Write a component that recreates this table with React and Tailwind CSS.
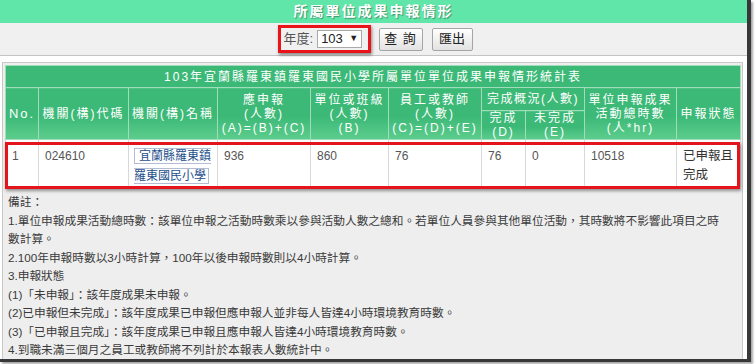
import React from 'react';

const TH = 'border border-[#a3dcbb] bg-linear-to-b from-[#3cb977] from-55% to-[#5ccd8d] text-white font-normal text-[12px] leading-[14px] tracking-[2px] text-center align-middle p-0';
const TD = 'border border-[#d8d8d8] bg-white align-top pl-[6px] pr-[2px] pt-[6px] text-[12px] leading-[20px] text-[#555]';

const NOTES = [
    '備註：',
    '1.單位申報成果活動總時數：該單位申報之活動時數乘以參與活動人數之總和。若單位人員參與其他單位活動，其時數將不影響此項目之時數計算。',
    '2.100年申報時數以3小時計算，100年以後申報時數則以4小時計算。',
    '3.申報狀態',
    '(1)「未申報」：該年度成果未申報。',
    '(2)已申報但未完成」：該年度成果已申報但應申報人並非每人皆達4小時環境教育時數。',
    '(3)「已申報且完成」：該年度成果已申報且應申報人皆達4小時環境教育時數。',
    '4.到職未滿三個月之員工或教師將不列計於本報表人數統計中。',
];

export default function App() {
    return (
        <div className="w-[755px] h-[364px] bg-white overflow-hidden font-['Liberation_Sans','Noto_Sans_CJK_TC',sans-serif]">
            <div className="w-[751px] h-[362px] bg-white border-r-4 border-b-[3px] border-[#383838] shadow-[2px_2px_2px_rgba(0,0,0,0.35)] flex flex-col overflow-hidden">
                {/* page title */}
                <div className="h-[23px] shrink-0 bg-[#60e6a8] flex items-center justify-center text-white font-bold text-[14px] tracking-[2px] [text-shadow:1px_1px_1px_rgba(0,0,0,0.35)]">
                    所屬單位成果申報情形
                </div>

                {/* toolbar */}
                <div className="h-[33px] shrink-0 bg-[#f0f0f0] border-b border-[#c4c4c4] flex items-center justify-center">
                    <div className="h-[28px] w-[93px] border-[3px] border-[#e8141a] shadow-[1px_2px_3px_rgba(0,0,0,0.45)] flex items-center pl-[3px] gap-[4px] ml-[3px]">
                        <span className="text-[13px] text-[#555]">年度:</span>
                        <div className="w-[45px] h-[18px] bg-white border border-[#a9a9a9] flex items-center justify-between px-[3px] text-[13px] text-[#222]">
                            <span>103</span>
                            <span className="text-[9px]">▼</span>
                        </div>
                    </div>
                    <button className="ml-[8px] h-[23px] w-[44px] border border-[#a5a5a5] rounded-[2px] bg-linear-to-b from-white to-[#e2e2e2] text-[13px] text-[#222] tracking-[1px]">
                        查 詢
                    </button>
                    <button className="ml-[9px] h-[23px] w-[41px] border border-[#a5a5a5] rounded-[2px] bg-linear-to-b from-white to-[#e2e2e2] text-[13px] text-[#222]">
                        匯出
                    </button>
                </div>

                {/* result panel */}
                <div className="mt-[6px] ml-[2px] mr-[4px] flex-1 bg-[#eeeeee] border border-b-0 border-[#c8c8c8] px-[2px] pt-[2px]">
                    <div className="relative">
                        <table className="w-[735px] table-fixed border-collapse">
                            <colgroup>
                                <col className="w-[33px]" />
                                <col className="w-[90px]" />
                                <col className="w-[89px]" />
                                <col className="w-[93px]" />
                                <col className="w-[78px]" />
                                <col className="w-[93px]" />
                                <col className="w-[44px]" />
                                <col className="w-[59px]" />
                                <col className="w-[92px]" />
                                <col className="w-[64px]" />
                            </colgroup>
                            <thead>
                                <tr className="h-[22px]">
                                    <th colSpan="10" className="border border-[#a3dcbb] bg-[#3cb977] text-white font-normal text-[12px] tracking-[2px] text-center p-0">
                                        103年宜蘭縣羅東鎮羅東國民小學所屬單位單位成果申報情形統計表
                                    </th>
                                </tr>
                                <tr className="h-[23px]">
                                    <th rowSpan="2" className={`${TH} text-[13px]`}>No.</th>
                                    <th rowSpan="2" className={TH}>機關(構)代碼</th>
                                    <th rowSpan="2" className={TH}>機關(構)名稱</th>
                                    <th rowSpan="2" className={TH}>應申報<br />(人數)<br />(A)=(B)+(C)</th>
                                    <th rowSpan="2" className={TH}>單位或班級<br />(人數)<br />(B)</th>
                                    <th rowSpan="2" className={TH}>員工或教師<br />(人數)<br />(C)=(D)+(E)</th>
                                    <th colSpan="2" className="border border-[#a3dcbb] bg-[#3cb977] text-white font-normal text-[12px] tracking-[1.5px] text-center p-0">完成概況(人數)</th>
                                    <th rowSpan="2" className={TH}>單位申報成果<br />活動總時數<br />(人*hr)</th>
                                    <th rowSpan="2" className={TH}>申報狀態</th>
                                </tr>
                                <tr className="h-[28px]">
                                    <th className={TH}>完成<br />(D)</th>
                                    <th className={TH}>未完成<br />(E)</th>
                                </tr>
                            </thead>
                            <tbody>
                                <tr className="h-[47px]">
                                    <td className={TD}>1</td>
                                    <td className={TD}>024610</td>
                                    <td className={`${TD} !pl-[5px] !pr-[4px]`}>
                                        <a className="border border-[#b4bcd4] pl-[4px] pr-[2px] text-[#1d4f8c] [box-decoration-break:slice] leading-[20px]">
                                            宜蘭縣羅東鎮羅東國民小學
                                        </a>
                                    </td>
                                    <td className={TD}>936</td>
                                    <td className={TD}>860</td>
                                    <td className={TD}>76</td>
                                    <td className={TD}>76</td>
                                    <td className={TD}>0</td>
                                    <td className={TD}>10518</td>
                                    <td className={`${TD} !text-[#333] !text-[12.5px] !leading-[19px] !pt-[7px]`}>已申報且完成</td>
                                </tr>
                            </tbody>
                        </table>
                        {/* annotation box drawn over the data row */}
                        <div className="absolute left-0 top-[77px] w-[735px] h-[47px] border-[3px] border-[#e3141b] shadow-[1px_2px_3px_rgba(0,0,0,0.4)] pointer-events-none" />
                    </div>

                    <div className="pl-[3px] pr-[10px] pt-[6px] text-[11.7px] leading-[18.5px] text-[#3a3a3a]">
                        {NOTES.map((n) => (
                            <div key={n}>{n}</div>
                        ))}
                    </div>
                </div>
            </div>
        </div>
    );
}
